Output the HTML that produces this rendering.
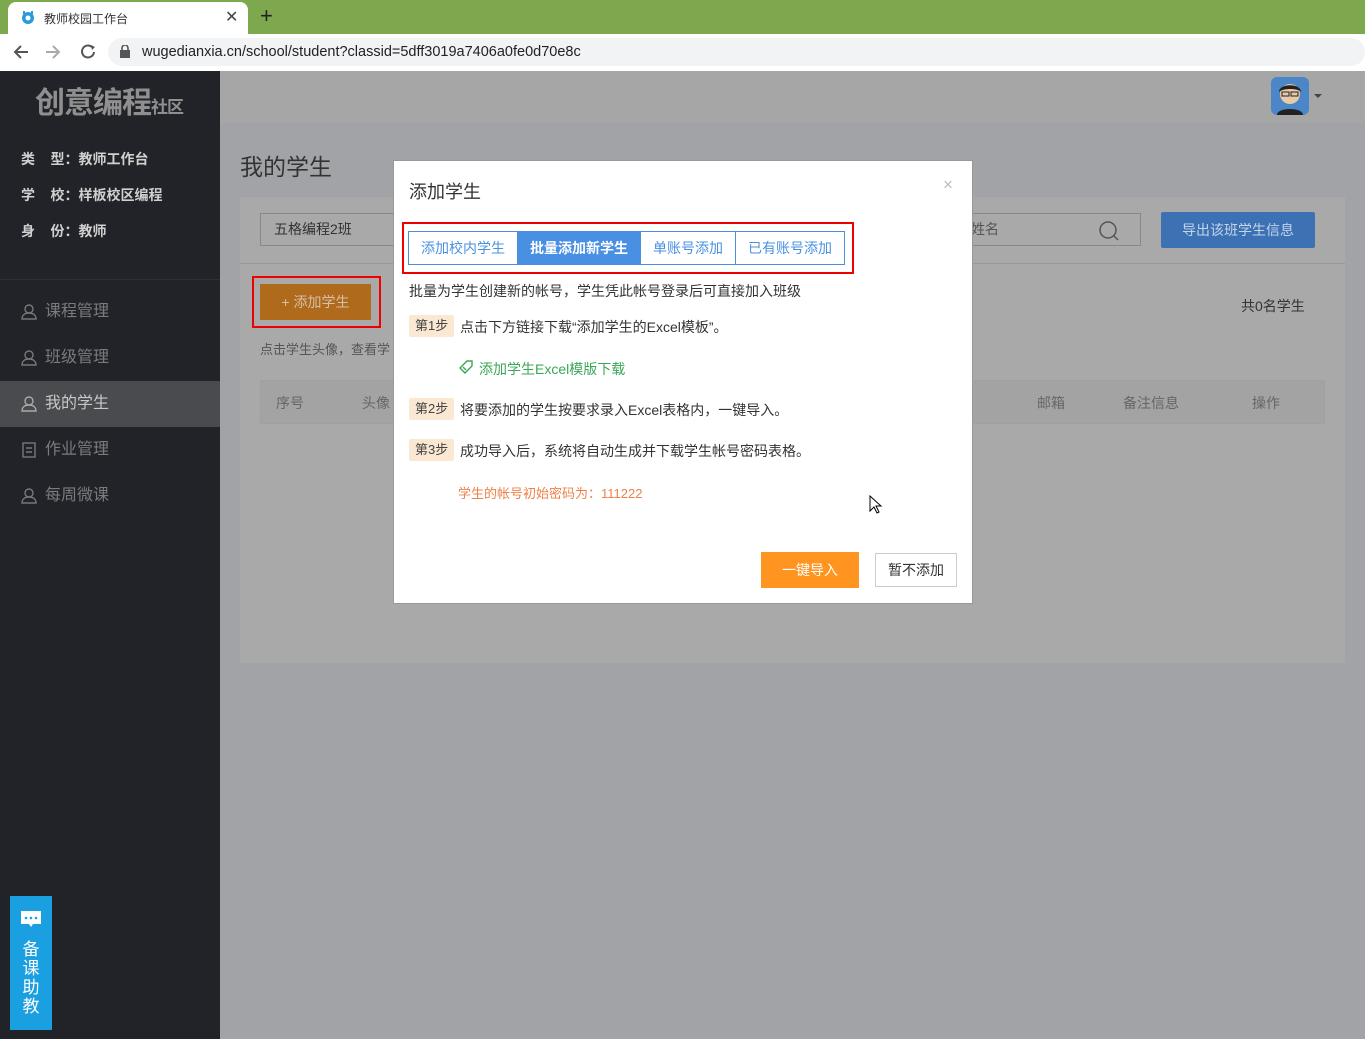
<!DOCTYPE html>
<html><head><meta charset="utf-8">
<style>
*{margin:0;padding:0;box-sizing:border-box}
body{width:1365px;height:1039px;overflow:hidden;position:relative;font-family:"Liberation Sans","Noto Sans CJK SC",sans-serif;font-size:14px;background:#a2a3a6;color:#333}
.a{position:absolute}
.tabbar{left:0;top:0;width:1365px;height:34px;background:#7ea84e}
.tab{left:8px;top:2px;width:240px;height:32px;background:#fff;border-radius:8px 8px 0 0;font-size:12px;color:#333}
.addr{left:0;top:34px;width:1365px;height:37px;background:#fff}
.url{left:108px;top:38px;width:1257px;height:28px;background:#f1f3f4;border-radius:14px;font-size:14.5px;color:#222;line-height:28px;padding-left:34px}
.side{left:0;top:71px;width:220px;height:968px;background:#222328}
.info{left:21px;color:#d0d0d0;font-size:14px;font-weight:bold}
.menu{left:0;width:220px;height:46px;line-height:46px;padding-left:45px;color:#7a7b7e;font-size:16px}
.header{left:220px;top:71px;width:1145px;height:52px;background:#a6a6a7}
.card{left:240px;top:197px;width:1105px;height:466px;background:#a9a9aa}
.dlg{left:393px;top:160px;width:580px;height:444px;background:#fff;border:1px solid #999}
.tabs{left:14px;top:70px;display:flex;border:1px solid #4a90e2;height:34px}
.tabs div{padding:0 12px;line-height:32px;color:#4a90e2;font-size:14px;border-right:1px solid #4a90e2}
.tabs div:last-child{border-right:none}
.tabs .on{background:#4a90e2;color:#fff;font-weight:bold}
.step{left:15px;background:#fbe8d2;color:#444;font-size:13px;padding:0 6px;height:22px;line-height:22px;border-radius:2px}
.st{left:66px;color:#333;font-size:14px}
</style></head><body>
<div class="a tabbar"></div>
<div class="a tab">
 <svg class="a" style="left:12px;top:8px" width="16" height="16" viewBox="0 0 16 16"><circle cx="8" cy="8" r="6" fill="#2a9bd6"/><circle cx="8" cy="8" r="2.5" fill="#fff"/><rect x="3" y="1" width="2" height="3" fill="#2a9bd6"/><rect x="11" y="1" width="2" height="3" fill="#2a9bd6"/></svg>
 <span class="a" style="left:36px;top:8px">教师校园工作台</span>
 <span class="a" style="left:217px;top:5px;font-size:16px;color:#444">✕</span>
</div>
<span class="a" style="left:260px;top:3px;font-size:22px;color:#222">+</span>
<div class="a addr"></div>
<svg class="a" style="left:12px;top:43px" width="90" height="18" viewBox="0 0 90 18"><path d="M16 9H3M9 3L3 9l6 6" stroke="#555" stroke-width="2" fill="none"/><path d="M34 9h13M41 3l6 6-6 6" stroke="#aaa" stroke-width="2" fill="none"/><path d="M80 4a6 6 0 1 0 2 5" stroke="#555" stroke-width="2" fill="none"/><path d="M79 2l4 2-3 3z" fill="#555"/></svg>
<div class="a url">wugedianxia.cn/school/student?classid=5dff3019a7406a0fe0d70e8c</div>
<svg class="a" style="left:120px;top:45px" width="10" height="13" viewBox="0 0 10 13"><rect x="0" y="5" width="10" height="8" fill="#555"/><path d="M2 5V3a3 3 0 0 1 6 0v2" stroke="#555" stroke-width="1.6" fill="none"/></svg>

<div class="a side"></div>
<div class="a" style="left:35px;top:78px;font-size:30px;font-weight:bold;color:#8f8f8f;letter-spacing:-1px">创意编程<span style="font-size:17px">社区</span></div>
<div class="a info" style="top:149px">类&nbsp;&nbsp;&nbsp;&nbsp;型：教师工作台</div>
<div class="a info" style="top:185px">学&nbsp;&nbsp;&nbsp;&nbsp;校：样板校区编程</div>
<div class="a info" style="top:221px">身&nbsp;&nbsp;&nbsp;&nbsp;份：教师</div>
<div class="a" style="left:0;top:279px;width:220px;height:1px;background:#2e3038"></div>
<div class="a menu" style="top:289px">课程管理</div>
<div class="a menu" style="top:335px">班级管理</div>
<div class="a menu" style="top:381px;background:#4a4b4e;color:#c8c8c8">我的学生</div>
<div class="a menu" style="top:427px">作业管理</div>
<div class="a menu" style="top:473px">每周微课</div>
<svg class="a" style="left:21px;top:304px" width="16" height="200" viewBox="0 0 16 200"><g stroke="#77787b" stroke-width="1.4" fill="none"><circle cx="8" cy="5" r="4"/><path d="M1 15c0-4 3-6 7-6s7 2 7 6z"/><circle cx="8" cy="51" r="4"/><path d="M1 61c0-4 3-6 7-6s7 2 7 6z"/><circle cx="8" cy="97" r="4" stroke="#aaa"/><path d="M1 107c0-4 3-6 7-6s7 2 7 6z" stroke="#aaa"/><rect x="2" y="139" width="12" height="14"/><path d="M5 144h6M5 148h6"/><circle cx="8" cy="189" r="4"/><path d="M1 199c0-4 3-6 7-6s7 2 7 6z"/></g></svg>
<div class="a" style="left:10px;top:896px;width:42px;height:134px;background:#1a9fe0;color:#fff;font-size:17px;text-align:center;line-height:19px;padding-top:44px">备<br>课<br>助<br>教</div>
<svg class="a" style="left:20px;top:910px" width="22" height="20" viewBox="0 0 22 20"><path d="M1 1h20v13h-8l-2 3-2-3H1z" fill="#fff"/><circle cx="6" cy="8" r="1.3" fill="#1a9fe0"/><circle cx="11" cy="8" r="1.3" fill="#1a9fe0"/><circle cx="16" cy="8" r="1.3" fill="#1a9fe0"/></svg>

<div class="a header"></div>
<div class="a" style="left:1271px;top:77px;width:38px;height:38px;background:#4a86c8;border-radius:6px;overflow:hidden"><svg width="38" height="38" viewBox="0 0 38 38"><circle cx="19" cy="17" r="10" fill="#e8c9a8"/><path d="M8 15c0-9 22-9 22 0-3-4-18-4-22 0z" fill="#222"/><path d="M6 38c0-8 26-8 26 0z" fill="#222"/><rect x="11" y="15" width="7" height="4" fill="none" stroke="#222"/><rect x="20" y="15" width="7" height="4" fill="none" stroke="#222"/></svg></div>
<div class="a" style="left:1314px;top:94px;border:4px solid transparent;border-top-color:#444"></div>
<div class="a" style="left:240px;top:148px;font-size:23px;color:#333">我的学生</div>
<div class="a card"></div>
<div class="a" style="left:240px;top:263px;width:1105px;height:1px;background:#999"></div>
<div class="a" style="left:260px;top:213px;width:140px;height:33px;border:1px solid #888;line-height:31px;padding-left:13px;color:#333">五格编程2班</div>
<div class="a" style="left:960px;top:213px;width:181px;height:33px;border:1px solid #888;line-height:31px;padding-left:10px;color:#555">姓名</div>
<svg class="a" style="left:1098px;top:220px" width="22" height="22" viewBox="0 0 22 22"><circle cx="10" cy="10" r="8" stroke="#555" stroke-width="1.5" fill="none"/><path d="M16 16l4 4" stroke="#555" stroke-width="1.5"/></svg>
<div class="a" style="left:1161px;top:212px;width:154px;height:36px;background:#3c72b4;color:#c3d3e8;text-align:center;line-height:36px;font-size:14px;border-radius:2px">导出该班学生信息</div>
<div class="a" style="left:252px;top:276px;width:129px;height:52px;border:2px solid #e00"></div>
<div class="a" style="left:260px;top:284px;width:111px;height:36px;background:#b06a1c;color:#d5c0a8;text-align:center;line-height:36px;font-size:14px">+ 添加学生</div>
<div class="a" style="left:260px;top:339px;font-size:13px;color:#555">点击学生头像，查看学</div>
<div class="a" style="left:1241px;top:296px;color:#333">共0名学生</div>
<div class="a" style="left:260px;top:380px;width:1065px;height:44px;background:#a3a3a4;border:1px solid #a0a0a0"></div>
<div class="a" style="left:276px;top:393px;color:#666">序号</div>
<div class="a" style="left:362px;top:393px;color:#666">头像</div>
<div class="a" style="left:1037px;top:393px;color:#666">邮箱</div>
<div class="a" style="left:1123px;top:393px;color:#666">备注信息</div>
<div class="a" style="left:1252px;top:393px;color:#666">操作</div>

<div class="a dlg">
 <div class="a" style="left:15px;top:17px;font-size:18px;color:#333">添加学生</div>
 <div class="a" style="left:549px;top:14px;font-size:17px;color:#bbb">×</div>
 <div class="a" style="left:8px;top:61px;width:452px;height:52px;border:2px solid #e00"></div>
 <div class="a tabs"><div>添加校内学生</div><div class="on">批量添加新学生</div><div>单账号添加</div><div>已有账号添加</div></div>
 <div class="a" style="left:15px;top:120px;color:#333">批量为学生创建新的帐号，学生凭此帐号登录后可直接加入班级</div>
 <div class="a step" style="top:154px">第1步</div><div class="a st" style="top:156px">点击下方链接下载“添加学生的Excel模板”。</div>
 <svg class="a" style="left:64px;top:198px" width="16" height="16" viewBox="0 0 16 16"><path d="M2 9l7-7h5v5l-7 7z" stroke="#3aa757" stroke-width="1.4" fill="none"/><path d="M5 8l3 3" stroke="#3aa757" stroke-width="1.4"/></svg>
 <div class="a" style="left:85px;top:198px;color:#3aa757">添加学生Excel模版下载</div>
 <div class="a step" style="top:237px">第2步</div><div class="a st" style="top:239px">将要添加的学生按要求录入Excel表格内，一键导入。</div>
 <div class="a step" style="top:278px">第3步</div><div class="a st" style="top:280px">成功导入后，系统将自动生成并下载学生帐号密码表格。</div>
 <div class="a" style="left:64px;top:322px;color:#f0804a;font-size:13px">学生的帐号初始密码为：111222</div>
 <div class="a" style="left:367px;top:391px;width:98px;height:36px;background:#ff9520;color:#fff;text-align:center;line-height:36px">一键导入</div>
 <div class="a" style="left:481px;top:392px;width:82px;height:34px;border:1px solid #ccc;text-align:center;line-height:32px;color:#333">暂不添加</div>
 <svg class="a" style="left:475px;top:334px" width="14" height="20" viewBox="0 0 14 20"><path d="M1 1v15l4-4 3 6 2-1-3-6h5z" fill="#fff" stroke="#000"/></svg>
</div>
</body></html>
